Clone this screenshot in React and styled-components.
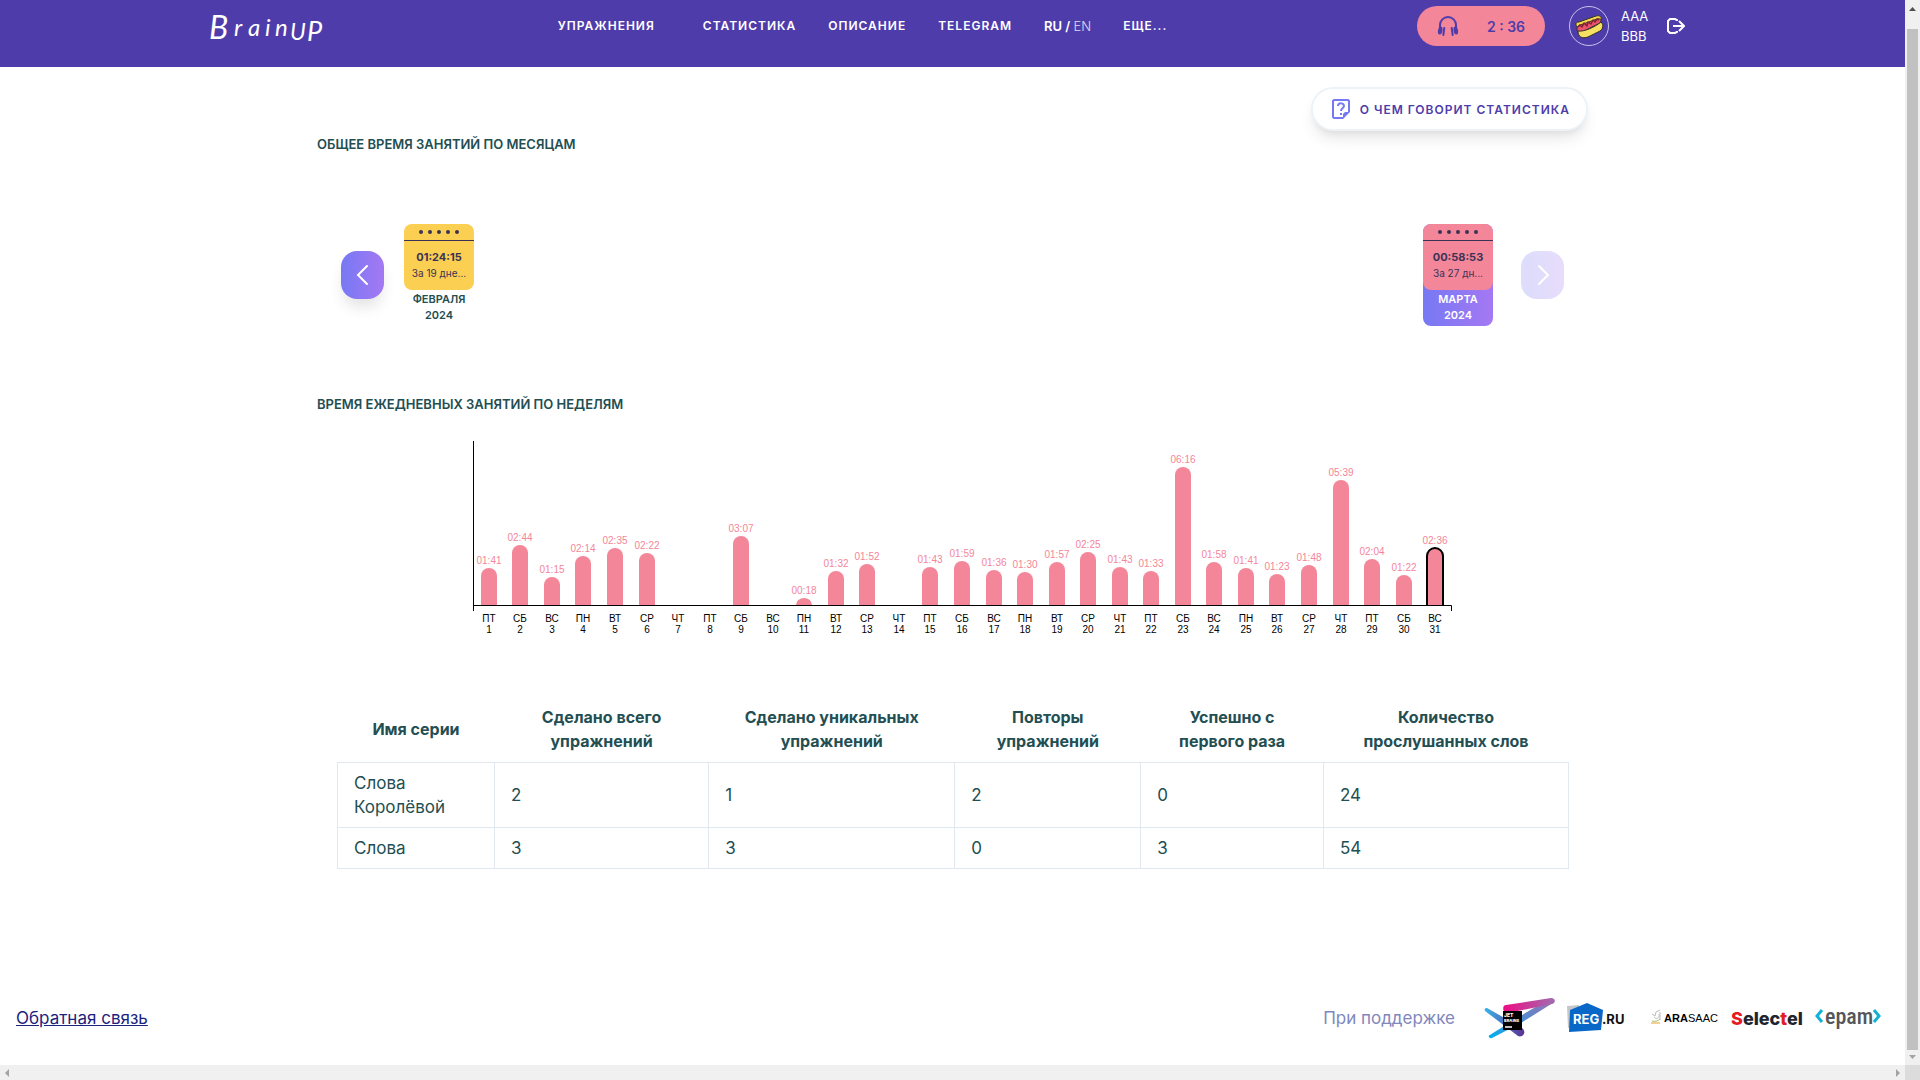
import React from "react";
import styled, { createGlobalStyle } from "styled-components";

const c = {
  purple: "#4f3cab",
  pink: "#f48699",
  yellow: "#fbcf52",
  teal: "#234e52",
  ink: "#3b3355",
  line: "#e2e8f0",
  from: "#7779f3",
  to: "#a578f3",
};

const GlobalStyle = createGlobalStyle`
  *, *::before, *::after { box-sizing: border-box; }
  body { margin: 0; background: #fff; font-family: Inter, "Noto Sans", sans-serif; color: ${c.teal}; }
  button { font: inherit; border: 0; padding: 0; background: none; cursor: pointer; }
  a { color: inherit; text-decoration: none; }
`;

const Frame = styled.div`
  display: grid;
  grid-template-columns: minmax(0, 1fr) 15px;
  grid-template-rows: minmax(0, 1fr) 15px;
  height: 100vh;
`;
const Page = styled.div`
  display: flex;
  flex-direction: column;
  overflow: hidden;
`;
const VBar = styled.div`
  display: flex;
  flex-direction: column;
  align-items: center;
  padding: 6px 0;
  background: #f0f0f0;
`;
const VThumb = styled.div`
  flex: 1;
  width: 11px;
  margin: 18px 0 5px;
  background: #c1c1c1;
`;
const HBar = styled.div`
  display: flex;
  align-items: center;
  justify-content: space-between;
  padding: 0 5px;
  background: #f0f0f0;
`;
const Corner = styled.div`
  background: #dcdcdc;
`;
const Glyph = styled.svg`
  display: block;
  flex: none;
`;

const Header = styled.header`
  flex: none;
  background: ${c.purple};
  color: #fff;
  padding: 6px 0 21px;
`;
const HeaderInner = styled.div`
  display: flex;
  align-items: center;
  max-width: 1537px;
  height: 40px;
  margin: 0 auto;
  padding: 0 36px 0 24px;
`;
const Brand = styled.a`
  flex: none;
  width: 116px;
`;
const Nav = styled.nav`
  display: flex;
  gap: 32px;
  margin: 0 auto;
  font-size: 12px;
  line-height: 24px;
  font-weight: 600;
  letter-spacing: 1px;
`;
const NavLink = styled.a`
  white-space: nowrap;
  margin-right: ${(p) => (p.$wide ? "16px" : "0")};
`;
const Lang = styled.span`
  white-space: nowrap;
  letter-spacing: normal;
  font-size: 13px;
`;
const Muted = styled.a`
  font-weight: 300;
  opacity: 0.8;
`;
const Tools = styled.div`
  display: flex;
  align-items: center;
  margin-left: 16px;
`;
const Timer = styled.button`
  display: flex;
  align-items: center;
  justify-content: space-between;
  width: 128px;
  height: 40px;
  padding: 0 20px;
  border-radius: 20px;
  background: ${c.pink};
  color: ${c.purple};
  font-size: 14px;
  font-weight: 600;
`;
const Avatar = styled.div`
  display: grid;
  place-items: center;
  width: 40px;
  height: 40px;
  margin: 0 12px 0 24px;
  border: 1px solid #c9c2ea;
  border-radius: 50%;
`;
const UserName = styled.div`
  width: 46px;
  font-size: 13px;
  line-height: 20px;
`;
const Logout = styled.button`
  color: #fff;
`;

const Main = styled.main`
  width: 100%;
  max-width: 1281px;
  margin: 0 auto;
  padding: 20px 5px 0;
`;
const TopRow = styled.div`
  display: flex;
  justify-content: flex-end;
`;
const InfoButton = styled.button`
  display: flex;
  align-items: center;
  gap: 9px;
  height: 44px;
  padding: 0 16px 0 18px;
  border: 2px solid #edf2f7;
  border-radius: 22px;
  background: #fff;
  color: ${c.purple};
  font-size: 12px;
  font-weight: 600;
  letter-spacing: 1px;
  box-shadow: 0 10px 15px -3px rgba(0, 0, 0, 0.1), 0 4px 6px -2px rgba(0, 0, 0, 0.05);
`;
const Title = styled.h2`
  margin: ${(p) => p.$top}px 0 0;
  font-size: 13px;
  line-height: 24px;
  font-weight: 600;
  text-transform: uppercase;
`;
const Months = styled.section`
  display: flex;
  align-items: center;
  justify-content: space-between;
  margin-top: 68px;
  padding: 0 24px;
`;
const MonthGroup = styled.div`
  display: flex;
  align-items: center;
  gap: ${(p) => p.$gap}px;
`;
const Arrow = styled.button`
  display: grid;
  place-items: center;
  width: 43px;
  height: 48px;
  border-radius: 16px;
  background: linear-gradient(90deg, ${c.from}, ${c.to});
  box-shadow: 0 10px 15px -3px rgba(0, 0, 0, 0.12);
  &:disabled { opacity: 0.25; box-shadow: none; }
`;
const Month = styled.button`
  display: block;
  width: 70px;
  border-radius: 8px;
  color: ${(p) => (p.$active ? "#fff" : c.teal)};
  background: ${(p) => (p.$active ? `linear-gradient(90deg, ${c.from}, ${c.to})` : "none")};
`;
const Sheet = styled.span`
  display: block;
  height: 66px;
  border-radius: 8px;
  background: ${(p) => p.$color};
  color: ${c.ink};
  text-align: center;
`;
const Rings = styled.span`
  display: flex;
  align-items: center;
  justify-content: center;
  gap: 5px;
  height: 17px;
  margin-bottom: 8px;
  border-bottom: 1px solid ${c.ink};
`;
const Ring = styled.i`
  width: 4px;
  height: 4px;
  border-radius: 50%;
  background: ${c.ink};
`;
const Total = styled.span`
  display: block;
  font-size: 11px;
  line-height: 16px;
  font-weight: 700;
`;
const Days = styled.span`
  display: block;
  font-size: 10px;
  line-height: 16px;
`;
const MonthName = styled.span`
  display: block;
  height: 36px;
  padding-top: 1px;
  font-size: 11px;
  line-height: 16px;
  font-weight: 600;
  text-align: center;
`;
const Chart = styled.svg`
  display: block;
  width: 1001px;
  max-width: 100%;
  height: 200px;
  margin: 25px auto 57px;
  font: 10px "Liberation Sans", Arial, sans-serif;
`;

const Table = styled.table`
  width: calc(100% - 39px);
  margin: 0 20px;
  border-collapse: collapse;
  table-layout: fixed;
  font-size: 17px;
  line-height: 24px;
`;
const Th = styled.th`
  width: ${(p) => p.$w}%;
  padding: 7px 16px 9px;
  font-size: 16px;
  font-weight: 700;
`;
const Td = styled.td`
  padding: 8px 16px;
  border: 1px solid ${c.line};
`;

const Footer = styled.footer`
  display: flex;
  align-items: center;
  justify-content: space-between;
  height: 94px;
  margin-top: auto;
  padding: 0 24px 0 16px;
  font-size: 17px;
`;
const Feedback = styled.a`
  color: #1a237e;
  text-decoration: underline;
`;
const Sponsors = styled.div`
  display: flex;
  align-items: center;
  color: #7f87bd;
`;
const SponsorLink = styled.a`
  margin-left: ${(p) => p.$gap}px;
`;

const days = ["ПТ", "СБ", "ВС", "ПН", "ВТ", "СР", "ЧТ"];
const times = [
  "01:41", "02:44", "01:15", "02:14", "02:35", "02:22", "", "", "03:07", "", "00:18",
  "01:32", "01:52", "", "01:43", "01:59", "01:36", "01:30", "01:57", "02:25", "01:43",
  "01:33", "06:16", "01:58", "01:41", "01:23", "01:48", "05:39", "02:04", "01:22", "02:36",
];
const columns = [
  ["Имя серии", 12.75],
  ["Сделано всего упражнений", 17.4],
  ["Сделано уникальных упражнений", 20],
  ["Повторы упражнений", 15.1],
  ["Успешно с первого раза", 14.85],
  ["Количество прослушанных слов", 19.9],
];
const rows = [
  ["Слова Королёвой", 2, 1, 2, 0, 24],
  ["Слова", 3, 3, 0, 3, 54],
];

function WeekChart() {
  const left = 21;
  const base = 164;
  const step = 978 / 31;
  return (
    <Chart viewBox="0 0 1001 200" role="img" aria-label="Время ежедневных занятий">
      {times.map((t, i) => {
        const x = Math.round(left + step * (i + 0.5));
        const [m, s] = t.split(":").map(Number);
        const h = t ? Math.round((m * 60 + s) * 0.368) : 0;
        const r = Math.min(8, h);
        const current = i === times.length - 1;
        return (
          <g key={i} textAnchor="middle">
            {t && (
              <path
                d={`M${x - 8} ${base}V${base - h + r}A8 ${r} 0 0 1 ${x + 8} ${base - h + r}V${base}`}
                fill={c.pink}
                stroke={current ? "#000" : "none"}
                strokeWidth="2"
              />
            )}
            {t && <text x={x} y={base - h - 4} fill={c.pink}>{t}</text>}
            <text x={x} y="181">{days[i % 7]}</text>
            <text x={x} y="192">{i + 1}</text>
          </g>
        );
      })}
      <path d="M21.500 0V170M21.500 164.500H999.500V170" fill="none" stroke="#000" />
    </Chart>
  );
}

function Logo() {
  return (
    <Glyph width="120" height="40" viewBox="0 0 120 40" fill="#fff" fontFamily="Lato, sans-serif" fontStyle="italic" fontWeight="400">
      <text y="33" fontSize="32" x="1">B</text>
      <text y="30" fontSize="24" x="26 40 57 67">rain</text>
      <text y="34" fontSize="23" x="82">U</text>
      <text y="35" fontSize="27" x="99">P</text>
    </Glyph>
  );
}

function Headphones() {
  return (
    <Glyph width="22" height="20" viewBox="0 0 22 20" fill="currentColor">
      <path d="M3 13V9a8 8 0 0 1 16 0v4" fill="none" stroke="currentColor" strokeWidth="2" />
      <ellipse cx="3.2" cy="14.5" rx="2.2" ry="4" transform="rotate(12 3.2 14.5)" />
      <ellipse cx="18.8" cy="14.5" rx="2.2" ry="4" transform="rotate(-12 18.8 14.5)" />
      <path d="M7.3 12l-1 7M14.7 12l1 7" stroke="currentColor" strokeWidth="2" strokeLinecap="round" />
    </Glyph>
  );
}

function HotDog() {
  return (
    <Glyph width="32" height="28" viewBox="0 0 32 28" strokeLinejoin="round">
      <path d="M4 15c-2-3-1-5 2-5L23 4c4-1 6 1 5 4L8 20z" fill="#f6d94f" stroke="#332" />
      <path d="M4 17c0-4 3-4 6-5l14-5c4-1 5 1 3 4L9 20c-3 1-5 0-5-3z" fill="#ed536c" stroke="#332" />
      <path d="M5 15l2-2 2 2 2-4 3 3 1-4 3 2 2-4 2 2 2-3 2 1" fill="none" stroke="#7f2338" strokeWidth="1.5" />
      <path d="M5 19c6 1 17-4 23-9 3 3 2 7-1 9l-12 6c-6 2-10 0-10-6z" fill="#f7df64" stroke="#332" />
    </Glyph>
  );
}

function Chevron({ dir }) {
  return (
    <Glyph width="14" height="22" viewBox="0 0 14 22">
      <path d={dir === "left" ? "M11 2L2 11l9 9" : "M3 2l9 9-9 9"} fill="none" stroke="#fff" strokeWidth="2" strokeLinecap="round" />
    </Glyph>
  );
}

function MonthCard({ color, total, daysText, name, active }) {
  return (
    <Month $active={active}>
      <Sheet $color={color}>
        <Rings>{[0, 1, 2, 3, 4].map((n) => <Ring key={n} />)}</Rings>
        <Total>{total}</Total>
        <Days>{daysText}</Days>
      </Sheet>
      <MonthName>{name}<br />2024</MonthName>
    </Month>
  );
}

function JetBrains() {
  return (
    <Glyph width="72" height="42" viewBox="0 0 72 42">
      <defs>
        <linearGradient id="jbPink"><stop stopColor="#ee0b83" /><stop offset="1" stopColor="#a06db0" /></linearGradient>
        <linearGradient id="jbBlue"><stop stopColor="#38b4ea" /><stop offset="1" stopColor="#5d2f93" /></linearGradient>
        <linearGradient id="jbSky" x1="0" y1="1" x2="1" y2="0"><stop stopColor="#00aeef" /><stop offset="1" stopColor="#a06db0" /></linearGradient>
      </defs>
      <path d="M5 38.5L33 21 66 1.5c3 0 5 3 2 5L37 26 8 41c-2 1-4-1-3-2.500z" fill="url(#jbSky)" />
      <path d="M3 11L38 31c5 4 1 10-4 8L1 14c-1-2 0-3 2-3z" fill="url(#jbBlue)" />
      <path d="M22 8L67 1c5 0 5 5 1 6L24 16c-6 0-6-8-2-8z" fill="url(#jbPink)" />
      <rect x="19" y="14" width="19" height="19" />
      <text x="20" y="20" fontSize="5" fontWeight="800" fill="#fff">JET</text>
      <text x="20" y="25" fontSize="4" fontWeight="800" fill="#fff">BRAINS</text>
      <path d="M21 30h7" stroke="#fff" strokeWidth="1.500" />
    </Glyph>
  );
}

function RegRu() {
  return (
    <Glyph width="59" height="32" viewBox="0 0 59 32">
      <path d="M1 4l12-1v22L2 26z" fill="#c5c7ca" />
      <path d="M4 8L21 1l16 7-2 20-32 2z" fill="#0967c8" />
      <text x="7" y="22" fontSize="13" fontWeight="700" fill="#fff" fontFamily="Inter">REG</text>
      <text x="36" y="22" fontSize="13" fontWeight="700" fill="#111" fontFamily="Inter">.RU</text>
    </Glyph>
  );
}

function Arasaac() {
  return (
    <Glyph width="68" height="20" viewBox="0 0 68 20" fontFamily="Liberation Sans, Arial">
      <path d="M1 6l3 2 1-4 4-2M3 9c2 3 6 1 5-3M9 4v8" fill="none" stroke="#b9bdba" />
      <path d="M1 13c3 1 6 0 8-2" stroke="#a8bd6a" fill="none" />
      <path d="M0 15h9" stroke="#ecc071" strokeWidth="1.500" />
      <text x="13" y="14" fontSize="11" fontWeight="700">ARA</text>
      <text x="37" y="14" fontSize="11">SAAC</text>
    </Glyph>
  );
}

function Selectel() {
  return (
    <Glyph width="72" height="22" viewBox="0 0 72 22" fontSize="18" fontWeight="800" fontFamily="Inter" fill="#20242c">
      <text x="0" y="18"><tspan fill="#e31b23">S</tspan>elec<tspan fill="#e31b23">t</tspan>el</text>
    </Glyph>
  );
}

function Epam() {
  return (
    <Glyph width="66" height="32" viewBox="0 0 66 32">
      <path d="M7 8L2 14l5 6M59 8l5 6-5 6" fill="none" stroke="#12b2d5" strokeWidth="3" />
      <text x="10" y="22" fontSize="22" fontWeight="500" fontFamily="'Roboto Condensed', 'Liberation Sans Narrow', Roboto, sans-serif" fill="#55565a">epam</text>
    </Glyph>
  );
}

export default function App() {
  return (
    <>
      <GlobalStyle />
      <Frame>
        <Page>
          <Header>
            <HeaderInner>
              <Brand href="#" aria-label="BrainUP"><Logo /></Brand>
              <Nav>
                <NavLink href="#" $wide>УПРАЖНЕНИЯ</NavLink>
                <NavLink href="#">СТАТИСТИКА</NavLink>
                <NavLink href="#">ОПИСАНИЕ</NavLink>
                <NavLink href="#">TELEGRAM</NavLink>
                <Lang><a href="#">RU</a> / <Muted href="#">EN</Muted></Lang>
                <NavLink href="#">ЕЩЕ...</NavLink>
              </Nav>
              <Tools>
                <Timer><Headphones /><span>2 : 36</span></Timer>
                <Avatar><HotDog /></Avatar>
                <UserName>AAA<br />BBB</UserName>
                <Logout aria-label="Выйти">
                  <Glyph width="18" height="18" viewBox="0 0 18 18" fill="none" stroke="currentColor" strokeWidth="2">
                    <path d="M10 4V3L8 2H3L1 4v10l2 2h5l2-1v-1M6 9h11M12 4l5 5-5 5" />
                  </Glyph>
                </Logout>
              </Tools>
            </HeaderInner>
          </Header>
          <Main>
            <TopRow>
              <InfoButton>
                <Glyph width="20" height="22" viewBox="0 0 20 22" fill="none" stroke="#7779f3" strokeWidth="2">
                  <path d="M12 20H3l-1-1V3l1-1h14l1 1v11" />
                  <path d="M12 21v-5l2-2h5z" fill="#7779f3" stroke="none" />
                  <path d="M7 8c0-4 6-3 6 0 0 2-3 2-3 5M10 15v2" />
                </Glyph>
                О ЧЕМ ГОВОРИТ СТАТИСТИКА
              </InfoButton>
            </TopRow>
            <Title $top={1}>Общее время занятий по месяцам</Title>
            <Months>
              <MonthGroup $gap={20}>
                <Arrow aria-label="Назад"><Chevron dir="left" /></Arrow>
                <MonthCard color={c.yellow} total="01:24:15" daysText="За 19 дне..." name="ФЕВРАЛЯ" />
              </MonthGroup>
              <MonthGroup $gap={28}>
                <MonthCard color={c.pink} total="00:58:53" daysText="За 27 дн..." name="МАРТА" active />
                <Arrow aria-label="Вперёд" disabled><Chevron dir="right" /></Arrow>
              </MonthGroup>
            </Months>
            <Title $top={66}>Время ежедневных занятий по неделям</Title>
            <WeekChart />
            <Table>
              <thead>
                <tr>{columns.map(([name, w]) => <Th key={name} $w={w}>{name}</Th>)}</tr>
              </thead>
              <tbody>
                {rows.map((row) => (
                  <tr key={row[0]}>{row.map((cell, i) => <Td key={i}>{cell}</Td>)}</tr>
                ))}
              </tbody>
            </Table>
          </Main>
          <Footer>
            <Feedback href="#">Обратная связь</Feedback>
            <Sponsors>
              <span>При поддержке</span>
              <SponsorLink href="#" $gap={29} aria-label="JetBrains"><JetBrains /></SponsorLink>
              <SponsorLink href="#" $gap={10} aria-label="REG.RU"><RegRu /></SponsorLink>
              <SponsorLink href="#" $gap={26} aria-label="ARASAAC"><Arasaac /></SponsorLink>
              <SponsorLink href="#" $gap={12} aria-label="Selectel"><Selectel /></SponsorLink>
              <SponsorLink href="#" $gap={12} aria-label="EPAM"><Epam /></SponsorLink>
            </Sponsors>
          </Footer>
        </Page>
        <VBar>
          <Glyph width="7" height="5" viewBox="0 0 7 5" fill="#505050"><path d="M0 5l3.500-4L7 5z" /></Glyph>
          <VThumb />
          <Glyph width="7" height="4" viewBox="0 0 7 4" fill="#a3a3a3"><path d="M0 0h7L3.500 4z" /></Glyph>
        </VBar>
        <HBar>
          <Glyph width="4" height="8" viewBox="0 0 4 8" fill="#a3a3a3"><path d="M4 0v8L0 4z" /></Glyph>
          <Glyph width="4" height="8" viewBox="0 0 4 8" fill="#a3a3a3"><path d="M0 0v8l4-4z" /></Glyph>
        </HBar>
        <Corner />
      </Frame>
    </>
  );
}
